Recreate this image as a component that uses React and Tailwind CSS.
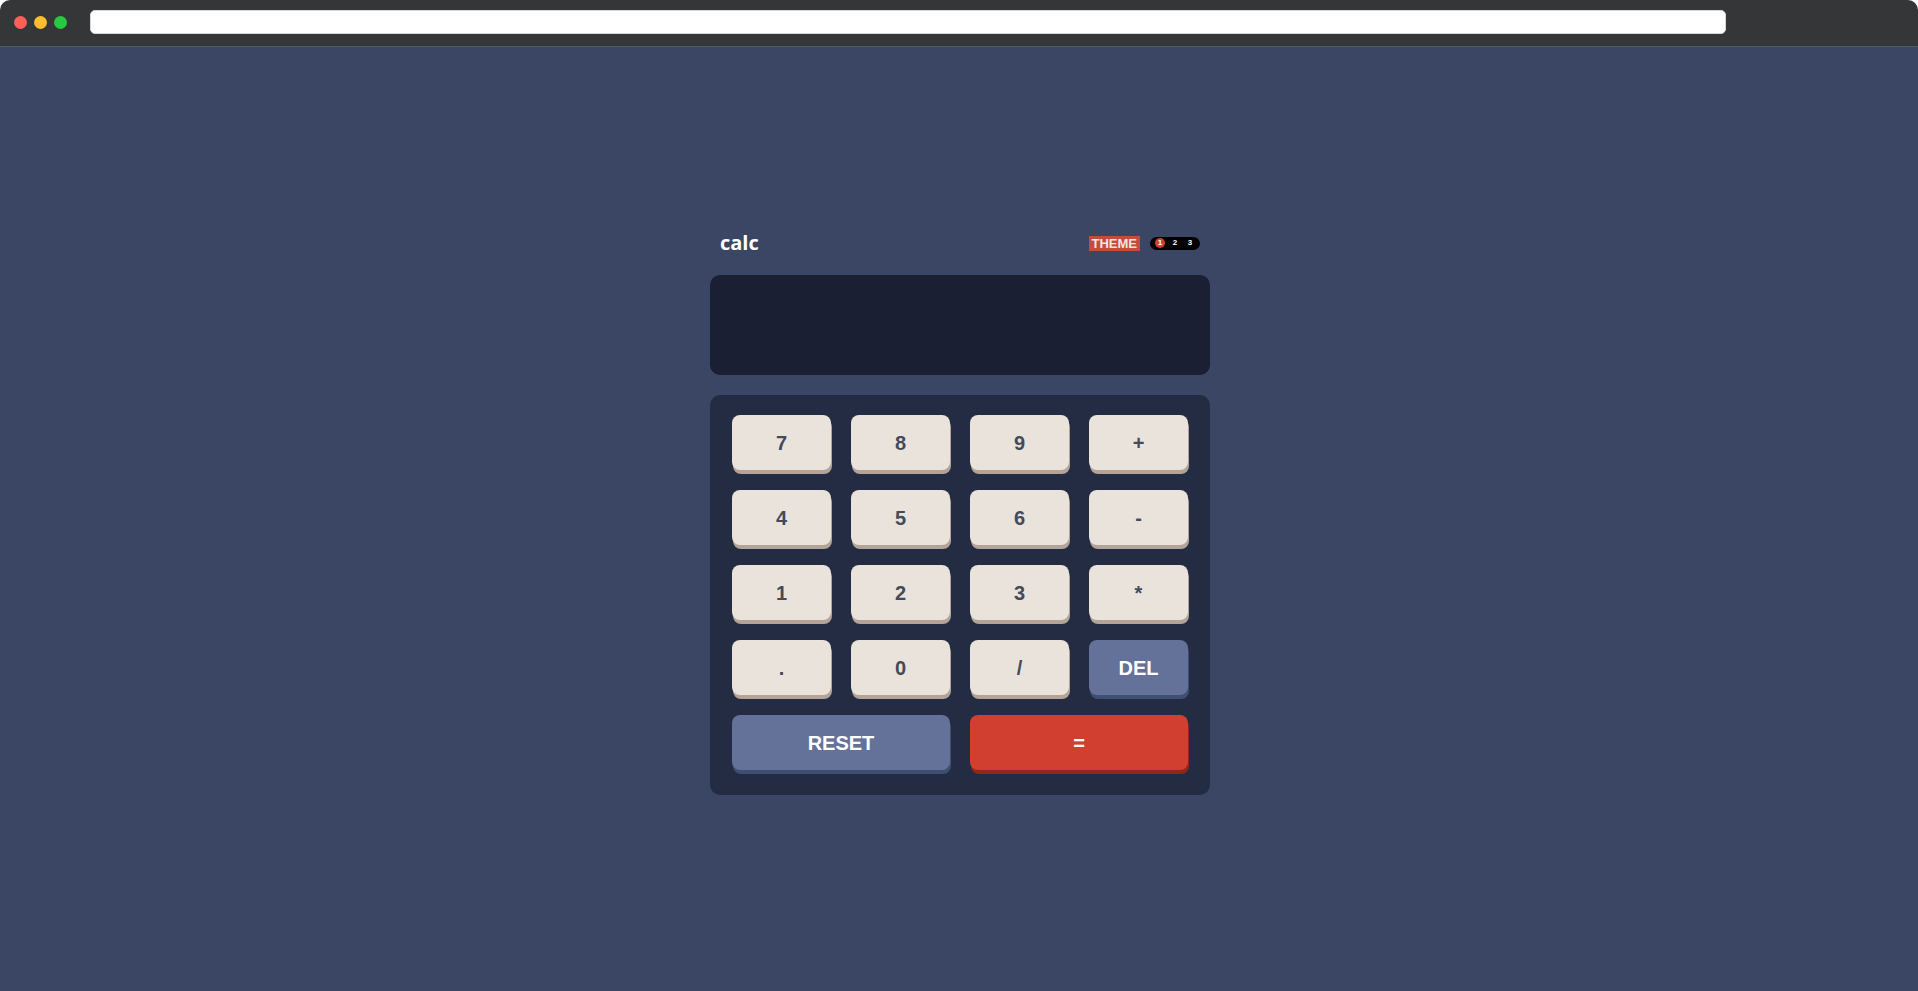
import React, { useState } from 'react';

const KEYS = [
    ['7', 'num'], ['8', 'num'], ['9', 'num'], ['+', 'num'],
    ['4', 'num'], ['5', 'num'], ['6', 'num'], ['-', 'num'],
    ['1', 'num'], ['2', 'num'], ['3', 'num'], ['*', 'num'],
    ['.', 'num'], ['0', 'num'], ['/', 'num'], ['DEL', 'del'],
];

function Key({ label, kind, wide, onClick }) {
    // each kind has its own face + bottom shadow colour
    const styles = {
        num: 'bg-[#eae3dc] text-[#434a59] shadow-[1px_4px_0_#b3a497]',
        del: 'bg-[#647198] text-white shadow-[1px_4px_0_#414e73]',
        eq: 'bg-[#d13f30] text-white shadow-[1px_4px_0_#93261a]',
    };
    return (
        <button
            onClick={() => onClick(label)}
            className={`h-[55px] rounded-[8px] text-[20px] font-bold flex items-center justify-center ${wide ? 'col-span-2' : ''} ${styles[kind]}`}
            style={{ fontFamily: '"Liberation Sans", Arial, sans-serif' }}
        >
            {label}
        </button>
    );
}

function BrowserBar() {
    return (
        <div className="h-[47px] bg-[#353638] rounded-t-[10px] border-b border-[#545865] flex items-start pt-[10px] pl-[14px] pr-[192px]">
            <div className="flex items-center gap-[7px] h-[24px]">
                <span className="w-[13px] h-[13px] rounded-full bg-[#fe5f57]" />
                <span className="w-[13px] h-[13px] rounded-full bg-[#febc2e]" />
                <span className="w-[13px] h-[13px] rounded-full bg-[#28c840]" />
            </div>
            <div className="ml-[23px] flex-1 h-[24px] bg-white rounded-[5px] border border-[#d8d8d8]" />
        </div>
    );
}

export default function App() {
    const [value, setValue] = useState('');
    const [theme, setTheme] = useState(1);

    const press = (label) => {
        if (label === 'DEL') return setValue((v) => v.slice(0, -1));
        if (label === 'RESET') return setValue('');
        if (label === '=') {
            try {
                // eslint-disable-next-line no-new-func
                setValue(String(Function(`return (${value})`)()));
            } catch (e) {
                setValue('');
            }
            return;
        }
        setValue((v) => v + label);
    };

    return (
        <div className="min-h-[991px] bg-white flex flex-col">
            <BrowserBar />
            <main className="flex-1 bg-[#3b4664] flex justify-center pt-[180px] pl-[2px]">
                <div className="w-[500px]">
                    {/* header */}
                    <div className="h-[32px] px-[10px] flex items-center justify-between mb-[16px]">
                        <h1
                            className="text-[20px] font-bold text-white leading-none"
                            style={{ fontFamily: '"Open Sans", sans-serif' }}
                        >
                            calc
                        </h1>
                        <div className="flex items-center gap-[10px]" style={{ fontFamily: '"Liberation Sans", Arial, sans-serif' }}>
                            <span className="bg-[#c64a3d] text-[#f6e3dd] text-[13px] font-bold leading-[15px] px-[3px]">THEME</span>
                            <div className="w-[50px] h-[13px] bg-black rounded-full flex items-center justify-between px-[5px]">
                                {[1, 2, 3].map((n) => (
                                    <button
                                        key={n}
                                        onClick={() => setTheme(n)}
                                        className={`w-[10px] h-[10px] rounded-full flex items-center justify-center text-[8px] font-bold text-white leading-none ${theme === n ? 'bg-[#d13f30]' : ''}`}
                                    >
                                        {n}
                                    </button>
                                ))}
                            </div>
                        </div>
                    </div>

                    {/* display */}
                    <div
                        className="h-[100px] bg-[#1a1f33] rounded-[10px] flex items-center justify-end px-[24px] text-white text-[36px] font-bold"
                        style={{ fontFamily: '"Liberation Sans", Arial, sans-serif' }}
                    >
                        {value}
                    </div>

                    {/* keypad */}
                    <div className="mt-[20px] bg-[#232c43] rounded-[10px] pt-[20px] pb-[25px] px-[22px] grid grid-cols-4 gap-x-[20px] gap-y-[20px]">
                        {KEYS.map(([label, kind]) => (
                            <Key key={label} label={label} kind={kind} onClick={press} />
                        ))}
                        <Key label="RESET" kind="del" wide onClick={press} />
                        <Key label="=" kind="eq" wide onClick={press} />
                    </div>
                </div>
            </main>
        </div>
    );
}
